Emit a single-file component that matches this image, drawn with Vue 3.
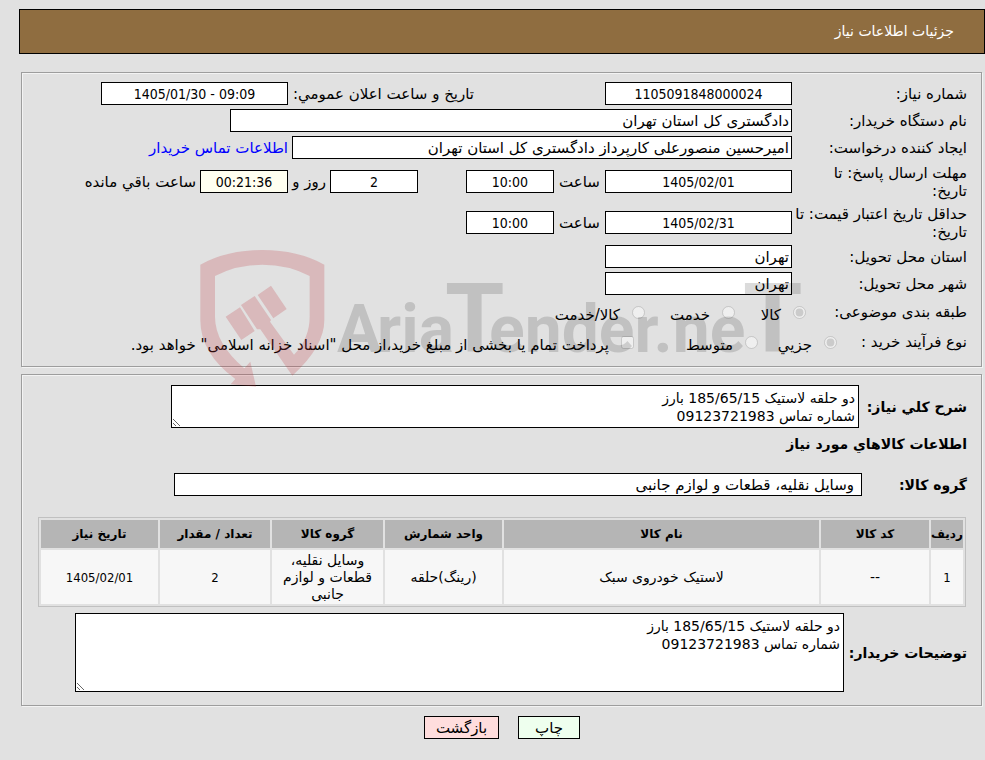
<script setup>
const columns = [
  { title: 'ردیف', width: 32, value: '1', numeric: true },
  { title: 'کد کالا', width: 108, value: '--' },
  { title: 'نام کالا', width: 0, value: 'لاستیک خودروی سبک' },
  { title: 'واحد شمارش', width: 117, value: '(رینگ)حلقه' },
  { title: 'گروه کالا', width: 111, value: 'وسایل نقلیه، قطعات و لوازم جانبی' },
  { title: 'تعداد / مقدار', width: 110, value: '2', numeric: true },
  { title: 'تاریخ نیاز', width: 117, value: '1405/02/01', numeric: true },
]
const description = 'دو حلقه لاستیک 185/65/15 بارز\nشماره تماس 09123721983'
</script>

<template>
  <main class="page" dir="rtl" lang="fa">
    <header class="title-bar">جزئیات اطلاعات نیاز</header>

    <section class="panel need-panel">
      <div class="row">
        <label class="caption" for="need-no">شماره نیاز:</label>
        <div class="first-half">
          <input id="need-no" class="box medium" readonly value="1105091848000024">
        </div>
        <label class="announce" for="announce">تاریخ و ساعت اعلان عمومي:</label>
        <input id="announce" class="box medium" dir="ltr" readonly value="1405/01/30 - 09:09">
      </div>

      <div class="row">
        <label class="caption" for="buyer">نام دستگاه خریدار:</label>
        <input id="buyer" class="box start buyer" readonly value="دادگستری کل استان تهران">
      </div>

      <div class="row">
        <label class="caption" for="creator">ایجاد کننده درخواست:</label>
        <input id="creator" class="box start creator" readonly value="امیرحسین منصورعلی کارپرداز دادگستری کل استان تهران">
        <a class="contact" href="#contact">اطلاعات تماس خریدار</a>
      </div>

      <div class="row double">
        <label class="caption" for="deadline">مهلت ارسال پاسخ: تا<br>تاریخ:</label>
        <div class="deadline-half">
          <input id="deadline" class="box medium" readonly value="1405/02/01">
          <label class="hour" for="deadline-hour">ساعت</label>
          <input id="deadline-hour" class="box short" readonly value="10:00">
        </div>
        <input id="days" class="box short" readonly value="2">
        <label class="days" for="days">روز و</label>
        <input id="remaining" class="box short cream" readonly value="00:21:36">
        <label class="remaining" for="remaining">ساعت باقي مانده</label>
      </div>

      <div class="row double">
        <label class="caption" for="validity">حداقل تاریخ اعتبار قیمت: تا<br>تاریخ:</label>
        <input id="validity" class="box medium" readonly value="1405/02/31">
        <label class="hour" for="validity-hour">ساعت</label>
        <input id="validity-hour" class="box short" readonly value="10:00">
      </div>

      <div class="row">
        <label class="caption" for="province">استان محل تحویل:</label>
        <input id="province" class="box start medium" readonly value="تهران">
      </div>

      <div class="row">
        <label class="caption" for="city">شهر محل تحویل:</label>
        <input id="city" class="box start medium" readonly value="تهران">
      </div>

      <div class="row choices" role="radiogroup" aria-labelledby="kind-title">
        <span id="kind-title" class="choice-caption kind">طبقه بندی موضوعی:</span>
        <label class="choice w-kind-a"><input type="radio" name="kind" checked disabled><span>کالا</span></label>
        <label class="choice w-kind-b"><input type="radio" name="kind" disabled><span>خدمت</span></label>
        <label class="choice"><input type="radio" name="kind" disabled><span>کالا/خدمت</span></label>
      </div>

      <div class="row choices" role="group" aria-labelledby="process-title">
        <span id="process-title" class="choice-caption process">نوع فرآیند خرید :</span>
        <label class="choice w-proc-a"><input type="radio" name="process" checked disabled><span>جزیي</span></label>
        <label class="choice w-proc-b"><input type="radio" name="process" disabled><span>متوسط</span></label>
        <label class="choice"><input type="checkbox" disabled><span>پرداخت تمام یا بخشی از مبلغ خرید،از محل "اسناد خزانه اسلامی" خواهد بود.</span></label>
      </div>

      <svg class="watermark" viewBox="0 0 604 144" aria-hidden="true">
        <g class="shield" transform="translate(-100 -19) scale(.33333)">
          <path d="M301 104Q380 60 487 60Q594 60 673 104V270Q673 350 577 437L481 298L471 298L423 225L464 198L513 270L510 275L582 374Q629 325 629 260V138Q565 104 487 104Q409 104 345 138V260Q345 340 433 415L451 395L468 470L392 463L406 447Q301 370 301 270Z" />
          <path d="M377 260L420 232L464 303L424 330ZM473 195L513 167L560 237L520 265Z" />
        </g>
        <text class="brand" y="103"><tspan x="137">A</tspan><tspan x="177">ria</tspan><tspan class="tall" x="245">T</tspan><tspan x="289">ender.ne</tspan><tspan class="tall" x="543">T</tspan></text>
      </svg>
    </section>

    <section class="panel goods-panel">
      <div class="goods-row">
        <label class="strong summary-caption" for="summary">شرح كلي نیاز:</label>
        <textarea id="summary" class="summary" readonly :value="description"></textarea>
      </div>
      <h2>اطلاعات كالاهاي مورد نیاز</h2>
      <div class="goods-row">
        <label class="strong group-caption" for="group">گروه کالا:</label>
        <input id="group" class="box start group" readonly value="وسایل نقلیه، قطعات و لوازم جانبی">
      </div>

      <table>
        <colgroup>
          <col v-for="c in columns" :key="c.title" :style="c.width ? { width: c.width + 'px' } : null">
        </colgroup>
        <thead>
          <tr><th v-for="c in columns" :key="c.title" scope="col">{{ c.title }}</th></tr>
        </thead>
        <tbody>
          <tr><td v-for="c in columns" :key="c.title" :class="{ numeric: c.numeric }">{{ c.value }}</td></tr>
        </tbody>
      </table>

      <div class="goods-row">
        <label class="strong notes-caption" for="notes">توضیحات خریدار:</label>
        <textarea id="notes" class="notes" readonly :value="description"></textarea>
      </div>
    </section>

    <footer class="actions">
      <button type="button" class="print">چاپ</button>
      <button type="button" class="back">بازگشت</button>
    </footer>
  </main>
</template>

<style>
body {
  background: #e1e1e1;
}
</style>

<style scoped>
.page,
.page * {
  box-sizing: border-box;
}

.page {
  padding: 9px 0 20px 19px;
  color: #000;
  font-family: "DejaVu Sans", sans-serif;
  font-size: 15px;
  line-height: 18px;
}

.page input,
.page textarea,
.page button {
  margin: 0;
  font-family: inherit;
  font-size: 15px;
}

.title-bar {
  height: 45px;
  padding: 0 30px;
  border: 1px solid #000;
  background: #8f6d40;
  color: #fff;
  font-size: 14px;
  line-height: 43px;
}

.panel {
  position: relative;
  margin: 0 3px 0 2px;
  border: 1px solid #9d9d9d;
  box-shadow: 1px 1px 0 #f3f3f3, inset 1px 1px 0 #f3f3f3;
}

.need-panel {
  margin-top: 18px;
  padding: 7px 14px 9px;
}

.row {
  display: flex;
  align-items: center;
  min-height: 27px;
  white-space: nowrap;
}

.row.double {
  min-height: 41px;
}

.caption {
  flex: 0 0 175px;
}

.page .box {
  height: 23px;
  padding: 0 2px;
  border: 1px solid #000;
  border-radius: 0;
  background: #fff;
  color: #000;
  font-family: "DejaVu Sans Condensed", "DejaVu Sans", sans-serif;
  font-size: 14px;
  text-align: center;
}

.page .box.start {
  font-family: "DejaVu Sans", sans-serif;
  font-size: 15px;
  text-align: start;
}

.medium {
  width: 187px;
}

.short {
  width: 88px;
}

.page .cream {
  background: #fffff0;
}

.buyer {
  width: 562px;
}

.creator {
  width: 500px;
}

.first-half {
  flex: 0 0 318px;
}

.announce {
  flex: 0 0 186px;
}

.contact {
  margin-right: 4px;
  color: #00f;
  text-decoration: none;
}

.deadline-half {
  display: flex;
  flex: 0 0 374px;
  align-items: center;
}

.hour {
  flex: 0 0 51px;
  text-align: center;
}

.days {
  flex: 0 0 42px;
  padding-right: 4px;
}

.remaining {
  margin-right: 4px;
}

.row.choices {
  min-height: 30px;
}

.choice-caption.kind {
  flex: 0 0 161px;
}

.choice-caption.process {
  flex: 0 0 130px;
}

.choice {
  display: flex;
  align-items: center;
  gap: 12px;
}

.choice input {
  width: 13px;
  height: 13px;
}

.choice span {
  margin: 3px 0 -3px;
}

.w-kind-a {
  flex: 0 0 71px;
}

.w-kind-b {
  flex: 0 0 90px;
}

.w-proc-a {
  flex: 0 0 79px;
}

.w-proc-b {
  flex: 0 0 124px;
}

.watermark {
  position: absolute;
  top: 176px;
  left: 178px;
  width: 604px;
  height: 144px;
  overflow: visible;
  pointer-events: none;
  z-index: 1;
}

.shield {
  fill: rgba(190, 50, 60, 0.23);
}

.brand {
  direction: ltr;
  fill: #000;
  font-family: Roboto, sans-serif;
  font-size: 66px;
  font-weight: bold;
  opacity: 0.14;
}

.tall {
  font-size: 96px;
}

.goods-panel {
  margin-top: 7px;
  padding: 10px 14px 13px;
}

.goods-row {
  display: flex;
  align-items: center;
}

.strong,
h2 {
  font-size: 14px;
  font-weight: bold;
  white-space: nowrap;
}

h2 {
  margin: 7px 0 20px;
  line-height: 18px;
}

textarea {
  padding: 3px;
  border: 1px solid #000;
  border-radius: 0;
  background: #fff;
  color: #000;
  line-height: 18px;
}

.page textarea {
  font-size: 14px;
}

.summary-caption {
  flex: 0 0 108px;
}

.summary {
  width: 688px;
  height: 43px;
}

.notes-caption {
  flex: 0 0 123px;
}

.notes {
  width: 769px;
  height: 79px;
}

.group-caption {
  flex: 0 0 105px;
}

.page .group {
  width: 688px;
  padding: 0 7px;
}

table {
  width: calc(100% - 3px);
  margin: 21px 1px 6px 2px;
  border: 1px solid #c0c0c0;
  border-spacing: 2px;
  border-collapse: separate;
  table-layout: fixed;
  font-size: 14px;
  line-height: 17px;
}

th,
td {
  padding: 0;
  text-align: center;
}

th {
  height: 28px;
  background: #b5b5b5;
  font-size: 12px;
  white-space: nowrap;
}

td {
  height: 54px;
  padding: 2px 8px 1px;
  background: #f7f7f7;
}

td.numeric {
  padding: 0;
  font-family: "DejaVu Sans Condensed", "DejaVu Sans", sans-serif;
  font-size: 13px;
}

.actions {
  display: flex;
  justify-content: center;
  gap: 19px;
  margin-top: 10px;
}

.actions button {
  height: 23px;
  padding: 0;
  border: 1px solid #000;
  border-radius: 0;
  color: #000;
}

.actions .print {
  width: 62px;
  background: #eeffee;
}

.actions .back {
  width: 75px;
  background: #ffdddd;
}
</style>
